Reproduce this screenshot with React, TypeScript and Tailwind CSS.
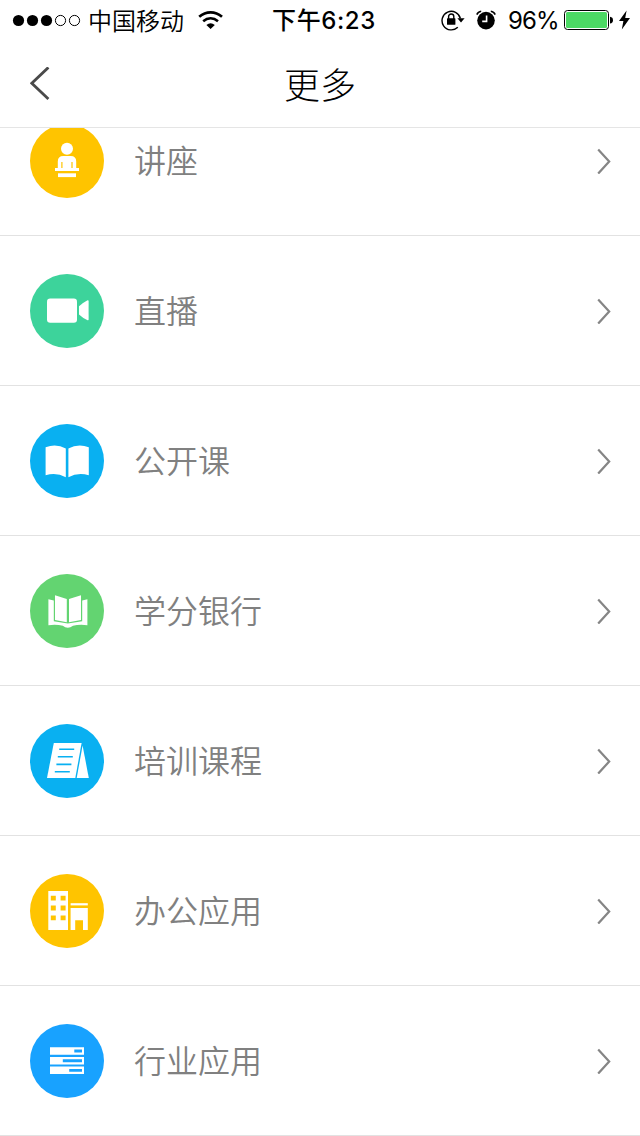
import type { ReactNode } from "react";

const LectureIcon = () => (
  <>
    <circle cx="37" cy="24.8" r="6" />
    <path d="M27.8 44V37.5Q27.8 32 33.3 32H40.7Q46.2 32 46.2 37.5V44H49V47H25V44ZM31.3 44H32.5V38H31.3ZM41.4 44H42.6V38H41.4Z" fillRule="evenodd" />
    <rect x="28" y="49.3" width="18" height="3.8" />
  </>
);

const LiveIcon = () => (
  <>
    <rect x="17" y="24.6" width="30" height="24.2" rx="3.2" />
    <path d="M49 32.2Q52.5 29 57.6 26.3Q58.6 26 58.6 27V45.6Q58.6 46.6 57.6 46.2Q52.5 44 49 40.6Z" />
  </>
);

const OpenCourseIcon = () => (
  <>
    <path d="M15.6 23.2Q26.5 19.3 35.8 24.6V53.2Q26.5 48 15.6 51.2Z" />
    <path d="M58.8 23.2Q47.9 19.3 38.4 24.6V53.2Q47.9 48 58.8 51.2Z" />
  </>
);

const CreditBankIcon = () => (
  <>
    <path d="M25 21.2L36.8 25V48.2L25 46Z" />
    <path d="M51 21.2L39 25V48.2L51 46Z" />
    <path d="M18.4 25.2L23.8 26.4V47.2L37.8 49.6L52.2 47.2V26.4L57.4 25.2V51.2Q49 50.2 43 51.8Q40.4 53.8 37.8 53.8Q35.2 53.8 32.8 51.8Q26.8 50.2 18.4 51.2Z" />
  </>
);

const TrainingIcon = () => (
  <>
    <path d="M23.8 19H51.6L45.3 54H17Z" />
    <path d="M52.6 21.6L58.8 54H46.7Z" />
    <path
      d="M29.2 25.2H44.2M27.8 32.8H42.8M26.4 40.4H41.4M24.8 47.8H39.8"
      stroke="#09b0f1"
      strokeWidth="1.6"
    />
  </>
);

const OfficeIcon = () => (
  <>
    <path
      d="M18.3 17H38V56H18.3ZM20.8 21.8V26.6H25.8V21.8ZM30.6 21.8V26.6H35.6V21.8ZM20.8 31.6V36.4H25.8V31.6ZM30.6 31.6V36.4H35.6V31.6ZM20.8 41.4V46.2H25.8V41.4ZM30.6 41.4V46.2H35.6V41.4Z"
      fillRule="evenodd"
    />
    <rect x="40.6" y="29.2" width="17.2" height="2.2" />
    <path d="M40.6 34H57.8V56H53V46.2H45.2V56H40.6Z" />
  </>
);

const IndustryIcon = () => (
  <path
    d="M20 23.3H54V30.8H20ZM44.3 25.6V28.5H52V25.6ZM20 33H54V40.4H20ZM32.8 35.2V38.2H52V35.2ZM20 42.6H54V50H20ZM39.2 44.9V47.7H52V44.9Z"
    fillRule="evenodd"
  />
);

interface MenuItem {
  label: string;
  color: string;
  icon: ReactNode;
}

const items: MenuItem[] = [
  { label: "讲座", color: "bg-[#ffc400]", icon: <LectureIcon /> },
  { label: "直播", color: "bg-[#3dd39b]", icon: <LiveIcon /> },
  { label: "公开课", color: "bg-[#09b0f1]", icon: <OpenCourseIcon /> },
  { label: "学分银行", color: "bg-[#63d471]", icon: <CreditBankIcon /> },
  { label: "培训课程", color: "bg-[#09b0f1]", icon: <TrainingIcon /> },
  { label: "办公应用", color: "bg-[#ffc400]", icon: <OfficeIcon /> },
  { label: "行业应用", color: "bg-[#18a2ff]", icon: <IndustryIcon /> },
];

function StatusBar() {
  return (
    <div className="grid h-10 grid-cols-[1fr_auto_1fr] items-center pl-3 pr-[9px] text-black">
      <div className="flex items-center">
        <svg width="70" height="14" viewBox="0 0 70 14">
          <circle cx="6.5" cy="7.5" r="5.6" />
          <circle cx="20.5" cy="7.5" r="5.6" />
          <circle cx="34.5" cy="7.5" r="5.6" />
          <circle cx="48.5" cy="7.5" r="5.1" fill="none" stroke="currentColor" />
          <circle cx="62.5" cy="7.5" r="5.1" fill="none" stroke="currentColor" />
        </svg>
        <span className="ml-[6px] pt-[3px] text-[24px] font-[350] leading-[37px]">中国移动</span>
        {/* Wi-Fi */}
        <svg className="ml-[14px]" width="26" height="20" viewBox="0 0 26 20" fill="none" stroke="currentColor">
          <path d="M1.2 6.8Q6.4 2.3 12.6 2.3T24 6.8" strokeWidth="2.7" />
          <path d="M5.2 11.2Q8.6 8.2 12.6 8.2T20 11.2" strokeWidth="2.5" />
          <path d="M12.6 19L8.4 15Q12.6 11.4 16.8 15Z" fill="currentColor" stroke="none" />
        </svg>
      </div>
      <span className="pl-[5px] pt-[2px] text-[24px] font-medium leading-[38px] tracking-[0.6px]">下午6:23</span>
      <div className="flex items-center justify-end">
        {/* Rotation lock */}
        <svg width="25" height="22" viewBox="0 0 25 22">
          <path d="M16.8 18.3A9.3 9.3 0 1 1 19.4 9.5" fill="none" stroke="currentColor" strokeWidth="1.4" />
          <path d="M16.4 9.3H23.6L20 13.6Z" />
          <rect x="6" y="9.2" width="8.4" height="6.6" rx="0.6" />
          <path d="M7.6 10V7.6A2.6 2.6 0 0 1 12.8 7.6V10" fill="none" stroke="currentColor" strokeWidth="1.4" />
        </svg>
        {/* Alarm */}
        <svg className="ml-[10px]" width="20" height="20" viewBox="0 0 20 20">
          <circle cx="10" cy="10.6" r="8.8" />
          <path d="M0.8 4.6Q2 1.6 5.2 1.2M19.2 4.6Q18 1.6 14.8 1.2" fill="none" stroke="currentColor" strokeWidth="1.5" />
          <path d="M10.6 5.4V11.4H6.2" fill="none" stroke="#fff" strokeWidth="1.6" />
        </svg>
        <span className="ml-3 w-[51px] whitespace-nowrap pt-[2px] text-[24px] leading-[38px] tracking-[-0.9px]">96%</span>
        {/* Battery */}
        <svg className="ml-[5px]" width="50" height="20" viewBox="0 0 50 20">
          <rect x="0.5" y="0.5" width="44" height="19" rx="3" fill="none" stroke="currentColor" />
          <rect x="2" y="2" width="41" height="16" rx="1.5" fill="#4cd964" />
          <path d="M46 6.8Q49 7.3 49 10.2T46 13.6Z" />
        </svg>
        <svg className="ml-1" width="13" height="20" viewBox="0 0 13 20">
          <path d="M8.6 0.5L1 11H5.4L3.8 19.5L12 8H7.2Z" />
        </svg>
      </div>
    </div>
  );
}

function Header() {
  return (
    <header className="grid h-22 grid-cols-[1fr_auto_1fr] items-center border-b border-[#e5e5e5] pl-[30px] pr-[30px]">
      <button type="button" aria-label="返回" className="w-5">
        <svg width="20" height="34" viewBox="0 0 20 34" fill="none" stroke="#4a4a4a" strokeWidth="2.8">
          <path d="M18.4 0.4L1.8 16.2L18.4 32" />
        </svg>
      </button>
      <h1 className="pt-[5px] text-[36px] font-light leading-none text-black">更多</h1>
    </header>
  );
}

function MenuRow({ label, color, icon }: MenuItem) {
  return (
    <li className="flex h-[150px] items-center border-b border-[#e2e2e2] pl-[30px] pr-[29px] pt-px">
      <div className={`size-[74px] shrink-0 rounded-full ${color}`}>
        <svg width="74" height="74" viewBox="0 0 74 74" fill="#fff">
          {icon}
        </svg>
      </div>
      <span className="ml-[30px] flex-1 pt-px text-[32px] font-[350] leading-none text-[#808080]">{label}</span>
      <svg width="14" height="26" viewBox="0 0 14 26" fill="none" stroke="#858585" strokeWidth="2.2">
        <path d="M1.2 1.4L12.2 13.5L1.2 25.6" />
      </svg>
    </li>
  );
}

export default function App() {
  return (
    <div className="flex h-[1136px] w-[640px] flex-col overflow-hidden bg-white font-['Inter','Noto_Sans_CJK_SC',sans-serif]">
      <StatusBar />
      <Header />
      {/* List is scrolled part of the way under the header */}
      <main className="flex-1 overflow-hidden">
        <ul className="-mt-[42px]">
          {items.map((item) => (
            <MenuRow key={item.label} {...item} />
          ))}
        </ul>
      </main>
    </div>
  );
}
